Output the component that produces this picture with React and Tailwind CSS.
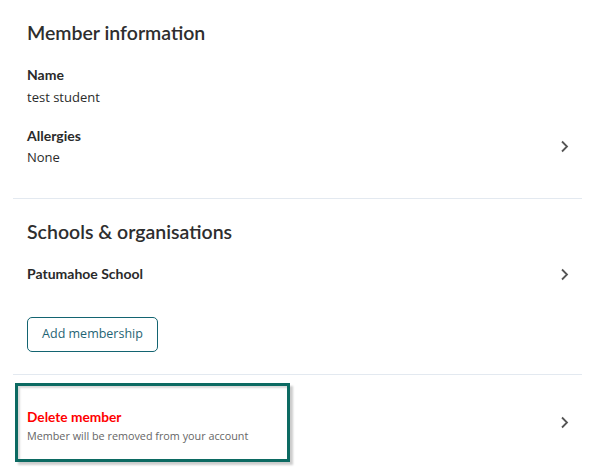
const Chevron = () => (
  <svg width="9" height="13" viewBox="0 0 9 13" fill="none" className="shrink-0">
    <path d="M2 1.5 L7 6.5 L2 11.5" stroke="#555" strokeWidth="1.8" />
  </svg>
);

const heading = "font-['Lato',sans-serif] text-[19.5px] leading-[24px] font-semibold text-[#2e2e2e]";
const label = "font-['Lato',sans-serif] text-[14px] leading-[20px] font-bold text-[#2a2a2a]";
const value = "font-['Open_Sans',sans-serif] text-[13px] leading-[20px] text-[#2b2b2b]";

export default function App() {
  return (
    <div className="w-[595px] h-[470px] bg-white overflow-hidden px-[13px]">
      {/* Member information */}
      <section className="pt-[21px] pb-[31px] border-b border-[#e3e9f0]">
        <h2 className={`${heading} px-[14px]`}>Member information</h2>
        <div className="px-[14px] mt-[20px]">
          <div className={label}>Name</div>
          <div className={`${value} mt-[2px]`}>test student</div>
        </div>
        <div className="pl-[14px] pr-[13px] mt-[19px] flex items-center justify-between">
          <div>
            <div className={label}>Allergies</div>
            <div className={`${value} mt-[1px]`}>None</div>
          </div>
          <Chevron />
        </div>
      </section>

      {/* Schools */}
      <section className="pt-[21px] pb-[22px] border-b border-[#e3e9f0]">
        <h2 className={`${heading} px-[14px]`}>Schools &amp; organisations</h2>
        <div className="pl-[14px] pr-[13px] mt-[20px] flex items-center justify-between">
          <div className={label}>Patumahoe School</div>
          <Chevron />
        </div>
        <div className="px-[14px] mt-[33px]">
          <button className="h-[35px] w-[131px] rounded-[5px] border border-[#136471] font-['Open_Sans',sans-serif] text-[12.5px] text-[#1f6474]">
            Add membership
          </button>
        </div>
      </section>

      {/* Delete */}
      <section className="pt-[8px] flex items-center justify-between pr-[13px]">
        <div className="ml-[2px] w-[275px] h-[79px] border-[3px] border-[#0c6a62] bg-white pl-[9px] pt-[21px] shadow-[3px_3px_2px_rgba(0,0,0,0.2),inset_2px_2px_2px_rgba(0,0,0,0.15)]">
          <div className="font-['Lato',sans-serif] text-[13.7px] leading-[20px] font-bold text-[#ff0000]">Delete member</div>
          <div className="font-['Open_Sans',sans-serif] text-[10.8px] leading-[16px] mt-[1px] text-[#666]">
            Member will be removed from your account
          </div>
        </div>
        <Chevron />
      </section>
    </div>
  );
}
